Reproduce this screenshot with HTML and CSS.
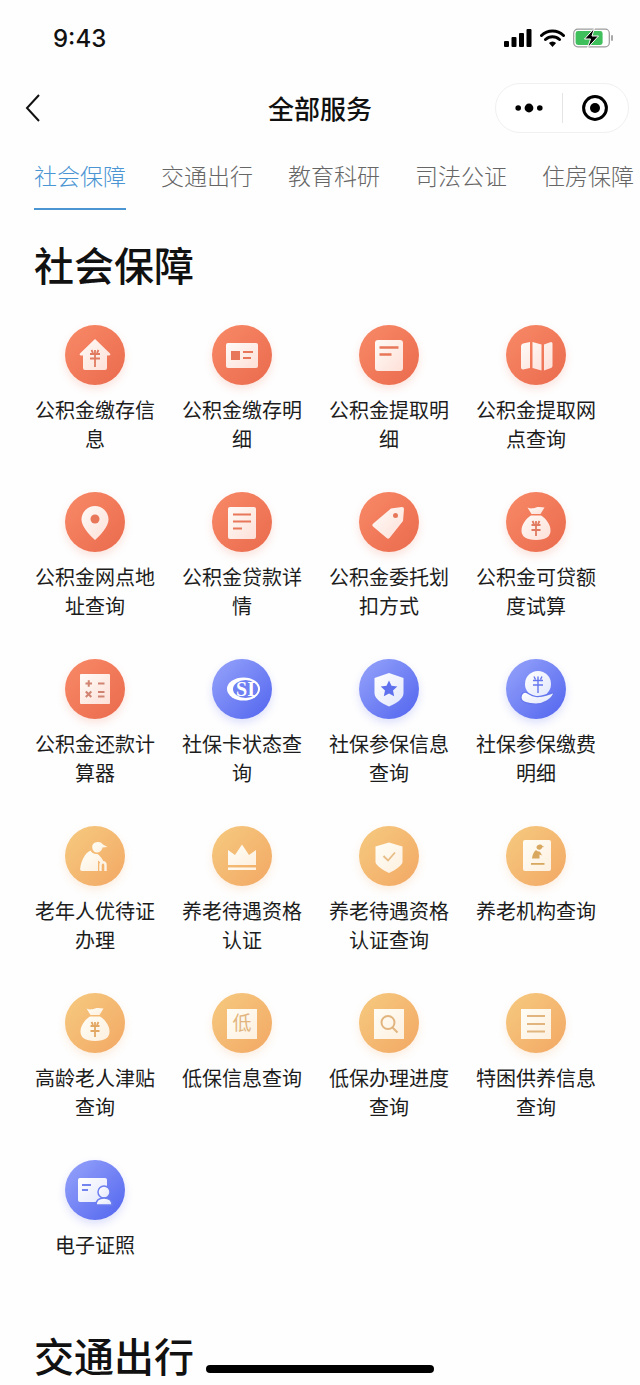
FILE: index.html
```html
<!DOCTYPE html>
<html lang="zh-CN">
<head>
    <meta charset="UTF-8">
    <meta name="viewport" content="width=device-width, initial-scale=1.0">
    <title>全部服务</title>
    <link rel="stylesheet" href="styles.css">
</head>
<body>
    <!-- shared gradients for the icon shapes -->
    <svg class="defs" width="0" height="0" aria-hidden="true">
        <defs>
            <linearGradient id="sheenRed" x1="0" y1="0" x2="1" y2="1"><stop offset="0" stop-color="#fffaf7"/><stop offset="1" stop-color="#fde0d7"/></linearGradient>
            <linearGradient id="sheenBlue" x1="0" y1="0" x2="1" y2="1"><stop offset="0" stop-color="#ffffff"/><stop offset="1" stop-color="#e2e6fb"/></linearGradient>
            <linearGradient id="sheenGold" x1="0" y1="0" x2="1" y2="1"><stop offset="0" stop-color="#fffdf6"/><stop offset="1" stop-color="#fdf0df"/></linearGradient>
        </defs>
    </svg>

    <!-- Status bar -->
    <div class="status-bar">
        <span class="time">9:43</span>
        <div class="status-icons">
            <svg width="28" height="18" viewBox="0 0 28 18"><rect x="0" y="12" width="5" height="6" rx="1"/><rect x="7.500" y="8" width="5" height="10" rx="1"/><rect x="15" y="4" width="5" height="14" rx="1"/><rect x="22.500" y="0" width="5" height="18" rx="1"/></svg>
            <svg width="25" height="18" viewBox="0 0 25 18"><path d="M1.500 6.500a16 16 0 0 1 22 0M5.500 10.500a10.300 10.300 0 0 1 14 0" fill="none" stroke="#000" stroke-width="3" stroke-linecap="round"/><path d="M12.500 18l-3.600-4a5 5 0 0 1 7.200 0z"/></svg>
            <svg width="40" height="20" viewBox="0 0 40 20"><rect x="0.700" y="1.200" width="35.600" height="17.600" rx="4" fill="none" stroke="#9c9c9c" stroke-width="1.200"/><rect x="2.600" y="3" width="27" height="14" rx="2.400" fill="#3fc05c"/><rect x="38" y="7" width="2" height="6" rx="1" fill="#a9a9a9"/><path d="M21.500 0L11.500 11h6L14.500 20 25.500 8h-6.500z" stroke="#fff" stroke-width="1"/></svg>
        </div>
    </div>

    <!-- Nav bar -->
    <div class="nav-bar">
        <svg class="back" width="18" height="30" viewBox="0 0 18 30"><path d="M15 2L3 15l12 13" fill="none" stroke="#111" stroke-width="2"/></svg>
        <h2 class="nav-title">全部服务</h2>
        <div class="capsule">
            <svg width="28" height="12" viewBox="0 0 28 12"><circle cx="3.200" cy="6" r="2.800"/><circle cx="14" cy="6" r="4.400"/><circle cx="24.800" cy="6" r="2.800"/></svg>
            <span class="capsule-line"></span>
            <svg width="28" height="28" viewBox="0 0 28 28"><circle cx="14" cy="14" r="11.400" fill="none" stroke="#000" stroke-width="3"/><circle cx="14" cy="14" r="5"/></svg>
        </div>
    </div>

    <!-- Tabs -->
    <div class="tabs">
        <span class="tab active">社会保障</span>
        <span class="tab">交通出行</span>
        <span class="tab">教育科研</span>
        <span class="tab">司法公证</span>
        <span class="tab">住房保障</span>
    </div>

    <!-- 社会保障 -->
    <h1 class="section-title">社会保障</h1>
    <div class="service-grid">
        <div class="service">
            <div class="badge red"><svg viewBox="0 0 60 60" fill="url(#sheenRed)"><path d="M30 14l15 14.500c.8.900.3 2-1 2h-2v12.500a2 2 0 0 1-2 2H20a2 2 0 0 1-2-2V30.500h-2c-1.300 0-1.800-1.100-1-2z"/><path d="M26.500 25l1.500 3M33.500 25l-1.500 3M25 29h10M25 33.500h10M30 25v17" fill="none" stroke="#e07a60" stroke-width="1.800"/></svg></div>
            <div class="service-name">公积金缴存信息</div>
        </div>
        <div class="service">
            <div class="badge red"><svg viewBox="0 0 60 60" fill="url(#sheenRed)"><rect x="14" y="18" width="32" height="25" rx="2"/><rect x="19" y="26" width="9" height="9" fill="#e8775a"/><path d="M31 27h10M31 33h8" fill="none" stroke="#e8775a" stroke-width="1.800"/></svg></div>
            <div class="service-name">公积金缴存明细</div>
        </div>
        <div class="service">
            <div class="badge red"><svg viewBox="0 0 60 60" fill="url(#sheenRed)"><rect x="16" y="15" width="28" height="31" rx="3"/><path d="M20.500 22.500h19M20.500 29.500h12" fill="none" stroke="#e8775a" stroke-width="2.400"/></svg></div>
            <div class="service-name">公积金提取明细</div>
        </div>
        <div class="service">
            <div class="badge red"><svg viewBox="0 0 60 60" fill="url(#sheenRed)"><path d="M15 21a3 3 0 0 1 2-2.500l7-1.500v26l-7 1.500a2 2 0 0 1-2-2zM26.500 17l9 2.500v26l-9-2.500zM38 19.500l7-2.500a1.500 1.500 0 0 1 1.500 1.500V41a2.500 2.500 0 0 1-1.500 2l-7 2.500z"/></svg></div>
            <div class="service-name">公积金提取网点查询</div>
        </div>
        <div class="service">
            <div class="badge red"><svg viewBox="0 0 60 60" fill="url(#sheenRed)"><path d="M30 14a13.500 13.500 0 0 1 13.500 13.500c0 7-8 15.500-13.500 20.500-5.500-5-13.500-13.500-13.500-20.500A13.500 13.500 0 0 1 30 14z"/><circle cx="30" cy="27" r="4.500" fill="#e8775a"/></svg></div>
            <div class="service-name">公积金网点地址查询</div>
        </div>
        <div class="service">
            <div class="badge red"><svg viewBox="0 0 60 60" fill="url(#sheenRed)"><rect x="16" y="15" width="28" height="32" rx="2"/><path d="M21 22.500h18M21 29.500h18M21 36.500h9" fill="none" stroke="#e8775a" stroke-width="2"/></svg></div>
            <div class="service-name">公积金贷款详情</div>
        </div>
        <div class="service">
            <div class="badge red"><svg viewBox="0 0 60 60" fill="url(#sheenRed)"><path d="M32 16.500l11-1.500a2 2 0 0 1 2 2l-1 12-13.500 17a2 2 0 0 1-2.800 0L14 34.500a2 2 0 0 1 0-2.800z"/><circle cx="36.500" cy="23.500" r="2.500" fill="#e8775a"/></svg></div>
            <div class="service-name">公积金委托划扣方式</div>
        </div>
        <div class="service">
            <div class="badge red"><svg viewBox="0 0 60 60" fill="url(#sheenRed)"><path d="M21.500 15.500c3 1.500 5 1 8.500 0s5.500 0 8.500 0l-4 6.500h-9z"/><path d="M25 23.500h10c5 3 9.500 9 9.500 15 0 6-4.500 9.500-14.500 9.500s-14.500-3.500-14.500-9.500c0-6 4.500-12 9.500-15z"/><path d="M26.500 29l1.500 3M33.500 29l-1.500 3M25.500 33h9M25.500 38h9M30 29v15" fill="none" stroke="#e07a60" stroke-width="1.800"/></svg></div>
            <div class="service-name">公积金可贷额度试算</div>
        </div>
        <div class="service">
            <div class="badge red"><svg viewBox="0 0 60 60" fill="url(#sheenRed)"><rect x="15" y="15" width="30" height="30" rx="1"/><path d="M20.500 24.500h6.500M23.750 21.250v6.500M33 24.500h6.500M20.800 32.500l5.500 5.500M26.300 32.500l-5.500 5.500M33 33h6.500M33 37.500h6.500" fill="none" stroke="#cf8370" stroke-width="2"/></svg></div>
            <div class="service-name">公积金还款计算器</div>
        </div>
        <div class="service">
            <div class="badge blue"><svg viewBox="0 0 60 60"><ellipse cx="31.500" cy="30" rx="16.500" ry="11.500" fill="#fff"/><ellipse cx="33.500" cy="30" rx="12.500" ry="9" fill="#6f80f2"/><text class="logo-si" x="33.500" y="37">SI</text></svg></div>
            <div class="service-name">社保卡状态查询</div>
        </div>
        <div class="service">
            <div class="badge blue"><svg viewBox="0 0 60 60" fill="url(#sheenBlue)"><path d="M30 14l14.500 5v15c0 6-7.500 10.500-14.500 13.500-7-3-14.500-7.500-14.500-13.500V19z"/><path d="M30 21.500l2.500 5.300 5.800.7-4.300 4 1.200 5.800-5.200-2.900-5.200 2.900 1.200-5.800-4.300-4 5.800-.7z" fill="#5f70ee"/></svg></div>
            <div class="service-name">社保参保信息查询</div>
        </div>
        <div class="service">
            <div class="badge blue"><svg viewBox="0 0 60 60" fill="url(#sheenBlue)"><circle cx="32" cy="25" r="13"/><path d="M28 17.500l1.500 3M36 17.500l-1.500 3M27 21.500h10M27 26h10M32 17.500V34" fill="none" stroke="#6677ee" stroke-width="1.400"/><path d="M15 38.500c0-3.500 2.500-6 5.500-5 3 1.500 5 3.500 9.500 4 6 .5 12-2 18-4-2 7-10 11.500-18 11.500-7.500 0-15-1.500-15-6.500z" stroke="#6677ee" stroke-width="1.200"/></svg></div>
            <div class="service-name">社保参保缴费明细</div>
        </div>
        <div class="service">
            <div class="badge gold"><svg viewBox="0 0 60 60" fill="url(#sheenGold)"><path d="M27.500 19c1.500-3.500 8-4.500 10.500-.5l4.500 2.500-5 .5c-.5 3-3 5-6 5s-5-4-4-7.500z"/><path d="M25.500 24.500c1 2.500 4 4 7 3.500 2.500 1.500 5 5 6 7.500l-2.500 1.500-3-2.500V45H17c-1.500 0-2-1-1.800-2.500C16 35 20 27 25.500 24.500z"/><path d="M35.500 45v-6c0-1.700 1-2.700 2.500-2.700s2.500 1 2.500 2.700v6" fill="none" stroke="#fdf4e4" stroke-width="2.400"/></svg></div>
            <div class="service-name">老年人优待证办理</div>
        </div>
        <div class="service">
            <div class="badge gold"><svg viewBox="0 0 60 60" fill="url(#sheenGold)"><path d="M16 24l7 5 7-10.500 7 10.500 7-5v15H16z"/><rect x="16" y="41.500" width="28" height="2.500"/></svg></div>
            <div class="service-name">养老待遇资格认证</div>
        </div>
        <div class="service">
            <div class="badge gold"><svg viewBox="0 0 60 60" fill="url(#sheenGold)"><path d="M30 16.500l13.500 4v15.500c0 3-7 8-13.500 11-6.500-3-13.500-8-13.500-11V20.500z"/><path d="M24.500 30l4.500 4.500 7-8" fill="none" stroke="#e8bd85" stroke-width="1.800"/></svg></div>
            <div class="service-name">养老待遇资格认证查询</div>
        </div>
        <div class="service">
            <div class="badge gold"><svg viewBox="0 0 60 60" fill="url(#sheenGold)"><rect x="17" y="14" width="28" height="31" rx="2"/><g fill="#d9a860"><path d="M30.500 21c.5-2.500 4.500-3.500 6-1l1.800 1-2 .3c-.5 1.500-1.500 2.500-3 2.500s-3-1.500-2.800-2.800z"/><path d="M30 24c1 1 2.500 1.500 3.500 1.500 1 1 2 2.500 2.500 4l-2.500-1v4H26c.3-3.500 1.800-7 4-8.500z"/><rect x="25" y="37" width="13.500" height="1.800"/></g></svg></div>
            <div class="service-name">养老机构查询</div>
        </div>
        <div class="service">
            <div class="badge gold"><svg viewBox="0 0 60 60" fill="url(#sheenGold)"><path d="M21.500 15.500c3 1.500 5 1 8.500 0s5.500 0 8.500 0l-4 6.500h-9z"/><path d="M25 23.500h10c5 3 9.500 9 9.500 15 0 6-4.500 9.500-14.500 9.500s-14.500-3.500-14.500-9.500c0-6 4.500-12 9.500-15z"/><path d="M26.500 29l1.500 3M33.500 29l-1.500 3M25.500 33h9M25.500 38h9M30 29v15" fill="none" stroke="#e3a764" stroke-width="1.800"/></svg></div>
            <div class="service-name">高龄老人津贴查询</div>
        </div>
        <div class="service">
            <div class="badge gold"><svg viewBox="0 0 60 60" fill="url(#sheenGold)"><rect x="15" y="16" width="30" height="30"/><text class="icon-char" x="30" y="37">低</text></svg></div>
            <div class="service-name">低保信息查询</div>
        </div>
        <div class="service">
            <div class="badge gold"><svg viewBox="0 0 60 60" fill="url(#sheenGold)"><rect x="15" y="16" width="30" height="30"/><circle cx="29" cy="29.500" r="6.500" fill="none" stroke="#e2b57e" stroke-width="2"/><path d="M33.500 34.500l5 5" fill="none" stroke="#e2b57e" stroke-width="2"/></svg></div>
            <div class="service-name">低保办理进度查询</div>
        </div>
        <div class="service">
            <div class="badge gold"><svg viewBox="0 0 60 60" fill="url(#sheenGold)"><rect x="15" y="16" width="30" height="30"/><path d="M21 23h18M21 31h18M21 38.500h18" fill="none" stroke="#e2b57e" stroke-width="2"/></svg></div>
            <div class="service-name">特困供养信息查询</div>
        </div>
        <div class="service">
            <div class="badge blue"><svg viewBox="0 0 60 60" fill="url(#sheenBlue)"><rect x="13" y="18" width="29" height="24" rx="2"/><path d="M17 25h9M17 30h6" fill="none" stroke="#7484ee" stroke-width="1.800"/><circle cx="39" cy="32" r="6" stroke="#6d7eef" stroke-width="1.500"/><path d="M31 45c0-5 3.500-7 8-7s8 2 8 7z" stroke="#6d7eef" stroke-width="1.500"/></svg></div>
            <div class="service-name">电子证照</div>
        </div>
    </div>

    <!-- 交通出行 -->
    <h1 class="section-title next">交通出行</h1>

    <div class="home-bar"></div>
</body>
</html>
```

FILE: styles.css
```css
/* General Body Styles */
body {
    position: relative;
    width: 640px;
    height: 1385px;
    margin: 0;
    overflow: hidden;
    background-color: #fefefe;
    color: #111;
    font-family: "Noto Sans CJK SC", "Liberation Sans", sans-serif;
}

.defs {
    position: absolute;
}

/* Status Bar */
.status-bar {
    display: flex;
    justify-content: space-between;
    align-items: center;
    height: 76px;
    padding: 0 27px 0 53px;
    box-sizing: border-box;
}

.time {
    font-family: Inter, "Liberation Sans", sans-serif;
    font-size: 24px;
    font-weight: 500;
}

.status-icons {
    display: flex;
    align-items: center;
    gap: 8px;
}

/* Nav Bar */
.nav-bar {
    display: flex;
    align-items: center;
    height: 64px;
    padding: 0 11px 0 24px;
}

.back {
    flex: none;
}

.nav-title {
    flex: 1;
    margin: 0;
    padding-left: 103px;
    text-align: center;
    font-size: 26px;
    font-weight: 500;
    line-height: 36px;
}

.capsule {
    display: flex;
    flex: none;
    justify-content: space-between;
    align-items: center;
    width: 134px;
    height: 50px;
    padding: 0 19px;
    box-sizing: border-box;
    border: 1px solid #f0f0f0;
    border-radius: 25px;
    background-color: #fff;
}

.capsule-line {
    width: 1px;
    height: 30px;
    background-color: #e4e4e4;
}

/* Tabs */
.tabs {
    display: flex;
    gap: 35px;
    height: 70px;
    padding-left: 34px;
    box-sizing: border-box;
    white-space: nowrap;
}

.tab {
    height: 70px;
    box-sizing: border-box;
    padding-top: 19px;
    font-size: 23px;
    line-height: 32px;
    font-weight: 300;
    color: #666;
}

.tab.active {
    color: #4b95d3;
    border-bottom: 2px solid #4b95d3;
}

/* Section Heading */
.section-title {
    margin: 26px 0 33px 34px;
    font-size: 40px;
    font-weight: 500;
    line-height: 56px;
    color: #111;
}

.section-title.next {
    margin-top: 68px;
}

/* Service Grid */
.service-grid {
    display: grid;
    grid-template-columns: repeat(4, 120px);
    column-gap: 27px;
    row-gap: 39px;
    padding-left: 35px;
}

.service {
    display: flex;
    flex-direction: column;
    align-items: center;
}

.badge {
    width: 60px;
    height: 60px;
    border-radius: 50%;
}

.badge svg {
    display: block;
    width: 60px;
    height: 60px;
}

.badge.red {
    background: linear-gradient(135deg, #f88a68, #ea6a4d);
    box-shadow: 0 4px 8px rgba(240, 120, 90, 0.2);
}

.badge.blue {
    background: linear-gradient(135deg, #96a4fa, #5264ef);
    box-shadow: 0 4px 8px rgba(90, 105, 240, 0.2);
}

.badge.gold {
    background: linear-gradient(135deg, #f6ca7f, #f2a865);
    box-shadow: 0 4px 8px rgba(243, 175, 105, 0.2);
}

.service-name {
    width: 120px;
    margin-top: 10px;
    text-align: center;
    font-size: 20px;
    line-height: 29px;
    color: #1c1c1c;
}

.logo-si {
    fill: #fff;
    font-family: "Liberation Serif", serif;
    font-size: 20px;
    font-weight: 700;
    text-anchor: middle;
}

.icon-char {
    fill: #e2b57e;
    font-size: 19px;
    text-anchor: middle;
}

/* Home Indicator */
.home-bar {
    position: absolute;
    left: 206px;
    bottom: 12px;
    width: 228px;
    height: 8px;
    border-radius: 4px;
    background-color: #000;
}
```
